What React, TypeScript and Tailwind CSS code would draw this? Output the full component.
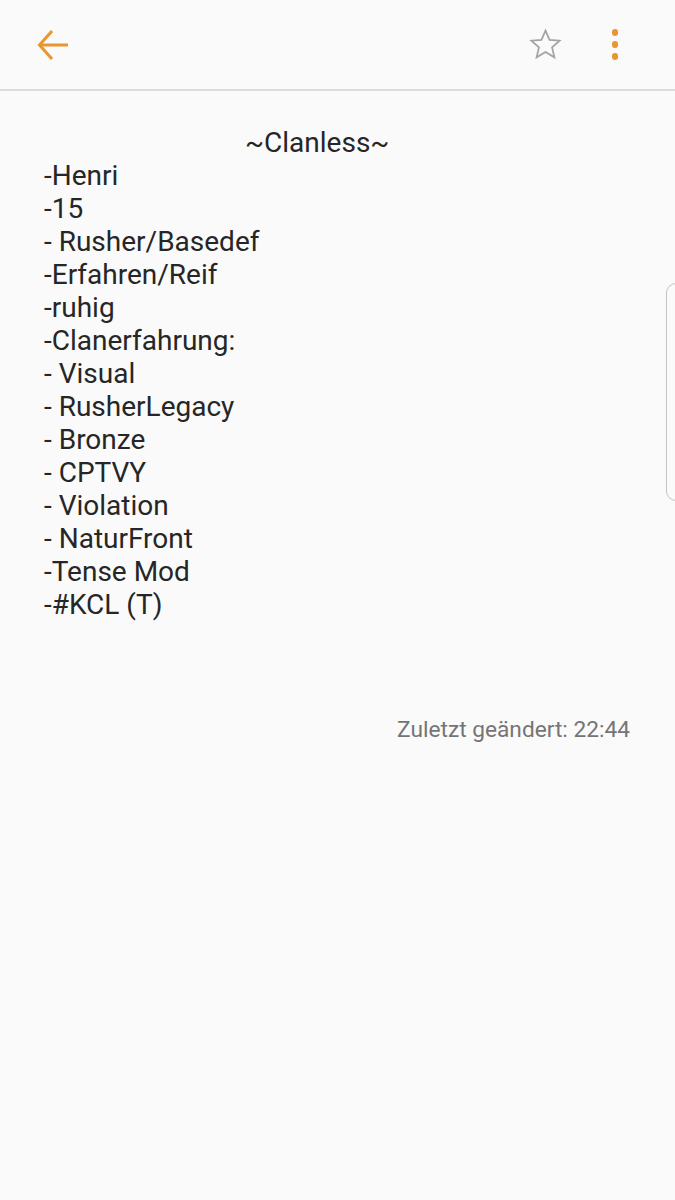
import React from "react";

const lines = [
  "-Henri",
  "-15",
  "- Rusher/Basedef",
  "-Erfahren/Reif",
  "-ruhig",
  "-Clanerfahrung:",
  "- Visual",
  "- RusherLegacy",
  "- Bronze",
  "- CPTVY",
  "- Violation",
  "- NaturFront",
  "-Tense Mod",
  "-#KCL (T)",
];

export default function App() {
  return (
    <div
      className="relative w-[675px] h-[1200px] bg-[#fafafa] overflow-hidden"
      style={{ fontFamily: "Roboto, 'Noto Sans', sans-serif" }}
    >
      <header className="h-[91px] flex items-center justify-between border-b-2 border-[#dcdcdc] pl-[36px] pr-[57px]">
        <svg width="32" height="32" viewBox="0 0 32 32" fill="none" stroke="#e8962e" strokeWidth="3" strokeLinecap="butt">
          <path d="M32 16H4" />
          <path d="M16 2L3.5 16L16 30" />
        </svg>
        <div className="flex items-center gap-[49px]">
          <svg width="35" height="35" viewBox="0 0 24 24" fill="none" stroke="#a3a3a3" strokeWidth="1.2" strokeLinejoin="miter">
            <path d="M12 2.5l2.8 6.3 6.9.6-5.2 4.6 1.6 6.8L12 17.2l-6.1 3.6 1.6-6.8-5.2-4.6 6.9-.6z" />
          </svg>
          <div className="flex flex-col gap-[5.5px] items-center">
            <span className="w-[6.5px] h-[6.5px] rounded-full bg-[#e8962e]" />
            <span className="w-[6.5px] h-[6.5px] rounded-full bg-[#e8962e]" />
            <span className="w-[6.5px] h-[6.5px] rounded-full bg-[#e8962e]" />
          </div>
        </div>
      </header>

      <main className="pt-[35px] px-[44px] text-[28px] leading-[33px] text-[#262626]">
        <div className="pl-[201px]">~Clanless~</div>
        {lines.map((l) => (
          <div key={l} className="whitespace-pre">{l}</div>
        ))}
        <div className="mt-[92px] pr-[1px] text-right text-[22.7px] leading-[33px] text-[#757575]">
          Zuletzt geändert: 22:44
        </div>
      </main>

      <div className="absolute right-[-12px] top-[283px] w-[21px] h-[218px] rounded-[10px] border border-[#c4c4c4] bg-[#fafafa]" />
    </div>
  );
}
